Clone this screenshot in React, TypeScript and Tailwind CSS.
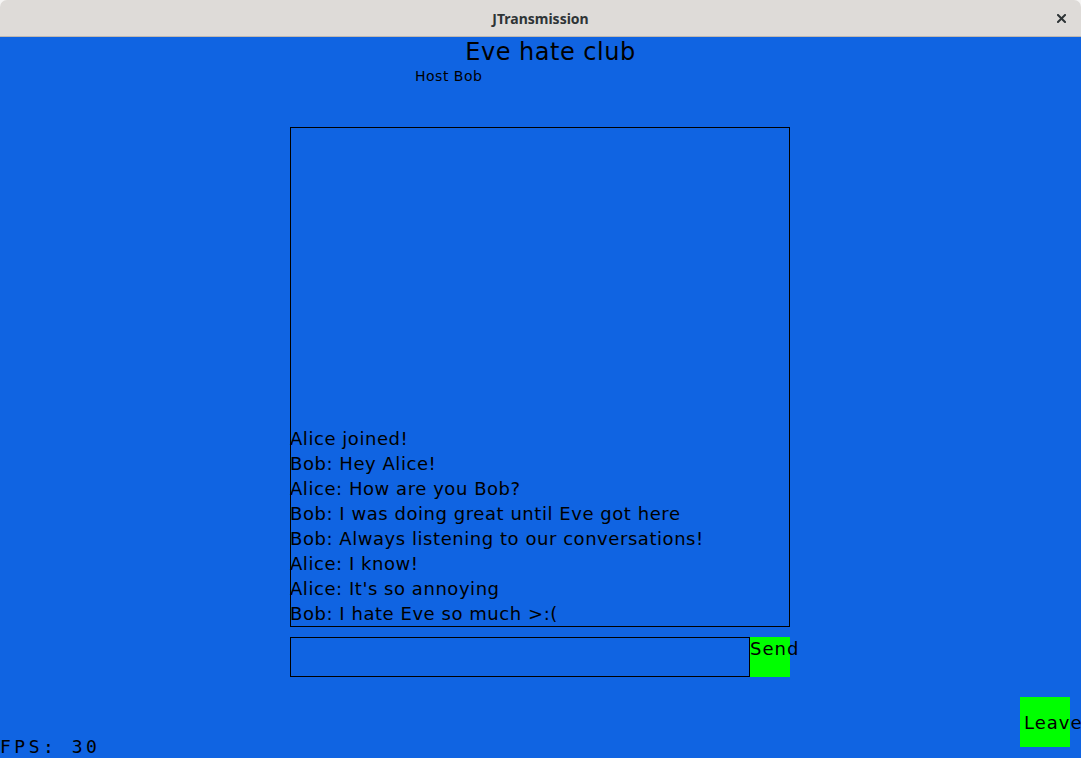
const messages = [
  'Alice joined!',
  'Bob: Hey Alice!',
  'Alice: How are you Bob?',
  'Bob: I was doing great until Eve got here',
  'Bob: Always listening to our conversations!',
  'Alice: I know!',
  "Alice: It's so annoying",
  'Bob: I hate Eve so much >:(',
]

export default function App() {
  return (
    <div className="w-[1081px] h-[758px] flex flex-col bg-[#f6f5f4] overflow-hidden">
      <div className="h-[37px] shrink-0 rounded-t-[7px] bg-[#dedbd8] border-b border-[#bfb8b1] flex items-center justify-center relative font-['Noto_Sans',sans-serif]">
        <span className="text-[14px] font-bold text-[#2e3436]">JTransmission</span>
        <svg className="absolute right-[15px] top-[14px]" width="9" height="9" viewBox="0 0 9 9">
          <path d="M1 1L8 8M8 1L1 8" stroke="#2e3436" strokeWidth="2" strokeLinecap="square" />
        </svg>
      </div>
      <div className="flex-1 bg-[#1064e2] flex flex-col font-['DejaVu_Sans',sans-serif] text-black">
        <h1 className="text-center text-[24px] leading-[28px] tracking-[0.5px] pl-[20px] mt-[1px]">Eve hate club</h1>
        <div className="pl-[415px] text-[14px] leading-[16px] tracking-[0.5px] mt-[2px]">Host Bob</div>
        <div className="ml-[290px] mt-[43px] w-[500px] h-[500px] border border-black flex flex-col justify-end">
          {messages.map((m, i) => (
            <div key={i} className="text-[18px] leading-[25px] tracking-[0.55px] whitespace-nowrap -ml-px">
              {m}
            </div>
          ))}
        </div>
        <div className="ml-[290px] mt-[10px] flex h-[40px] w-[500px]">
          <div className="flex-1 border border-black" />
          <div className="w-[40px] bg-[#00ff00] text-[18px] leading-[24px] tracking-[1px] whitespace-nowrap overflow-visible">Send</div>
        </div>
        <div className="flex-1 flex items-end justify-between">
          <div className="font-['DejaVu_Sans_Mono',monospace] text-[18px] leading-[20px] tracking-[3.5px] mb-[1px]">FPS: 30</div>
          <div className="w-[50px] h-[50px] bg-[#00ff00] mr-[11px] mb-[11px] flex items-center text-[18px] tracking-[1px] whitespace-nowrap pl-[4px]">
            Leave
          </div>
        </div>
      </div>
    </div>
  )
}
